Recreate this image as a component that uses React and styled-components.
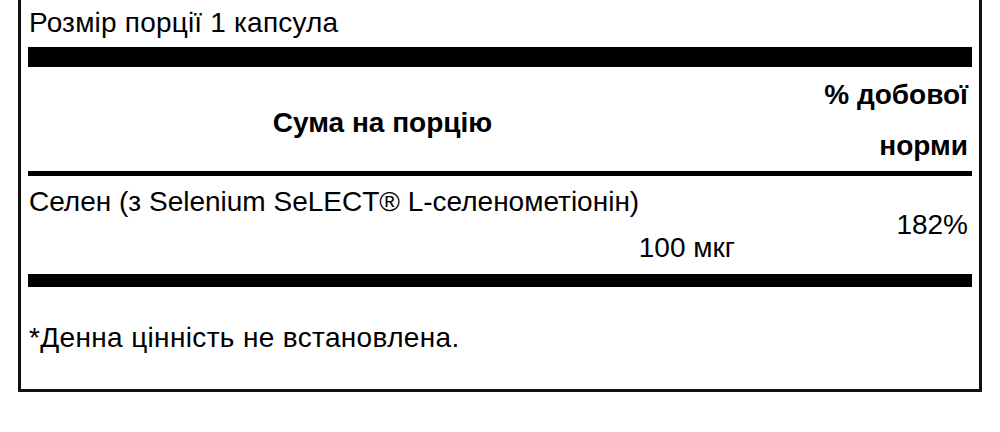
import React from 'react';
import styled, { createGlobalStyle } from 'styled-components';

const GlobalStyle = createGlobalStyle`
  html, body {
    margin: 0;
    padding: 0;
    background: #fff;
  }
  body {
    font-family: "Liberation Sans", Arial, sans-serif;
    color: #000;
  }
`;

const FACTS = {
  serving: 'Розмір порції 1 капсула',
  amountHead: 'Сума на порцію',
  dvHead: ['% добової', 'норми'],
  nutrient: {
    name: 'Селен (з Selenium SeLECT® L-селенометіонін)',
    amount: '100 мкг',
    dv: '182%',
  },
  note: '*Денна цінність не встановлена.',
};

const App = () => {
  const { nutrient } = FACTS;
  return (
    <>
      <GlobalStyle />
      <Label>
        <ServingSize>{FACTS.serving}</ServingSize>
        <Rule $h={20} />
        <HeaderRow>
          <HeadAmount>{FACTS.amountHead}</HeadAmount>
          <HeadDV>
            {FACTS.dvHead.map((line) => (
              <div key={line}>{line}</div>
            ))}
          </HeadDV>
        </HeaderRow>
        <Rule $h={5} />
        <NutrientRow>
          <NutrientMain>
            <NutrientName>{nutrient.name}</NutrientName>
            <NutrientAmount>{nutrient.amount}</NutrientAmount>
          </NutrientMain>
          <Percent>{nutrient.dv}</Percent>
        </NutrientRow>
        <Rule $h={13} />
        <Footnote>{FACTS.note}</Footnote>
      </Label>
    </>
  );
};

export default App;

const Label = styled.section`
  width: 964px;
  box-sizing: border-box;
  margin: -6px 0 0 18px;
  padding: 10px 7px 0;
  border: 3px solid #111;
  font-size: 28px;
`;

const ServingSize = styled.div`
  line-height: 32px;
  padding-left: 1px;
  margin-bottom: 8px;
  letter-spacing: 0.2px;
`;

const Rule = styled.div`
  height: ${(p) => p.$h}px;
  background: #000;
`;

const HeaderRow = styled.div`
  display: grid;
  grid-template-columns: 709px 1fr;
  padding-top: 2px;
  font-weight: bold;
`;

const HeadAmount = styled.div`
  align-self: center;
  text-align: center;
  padding-top: 6px;
  line-height: 32px;
`;

const HeadDV = styled.div`
  text-align: right;
  line-height: 51px;
  padding-right: 4px;
`;

const NutrientRow = styled.div`
  display: grid;
  grid-template-columns: 709px 1fr;
  padding: 3px 0;
`;

const NutrientMain = styled.div`
  display: flex;
  flex-direction: column;
  line-height: 46px;
`;

const NutrientName = styled.div`
  padding-left: 1px;
  white-space: nowrap;
`;

const NutrientAmount = styled.div`
  text-align: right;
  padding-right: 2px;
`;

const Percent = styled.div`
  align-self: center;
  text-align: right;
  padding-right: 4px;
  line-height: 32px;
`;

const Footnote = styled.div`
  line-height: 32px;
  padding: 35px 0 35px 1px;
  letter-spacing: 0.35px;
`;
